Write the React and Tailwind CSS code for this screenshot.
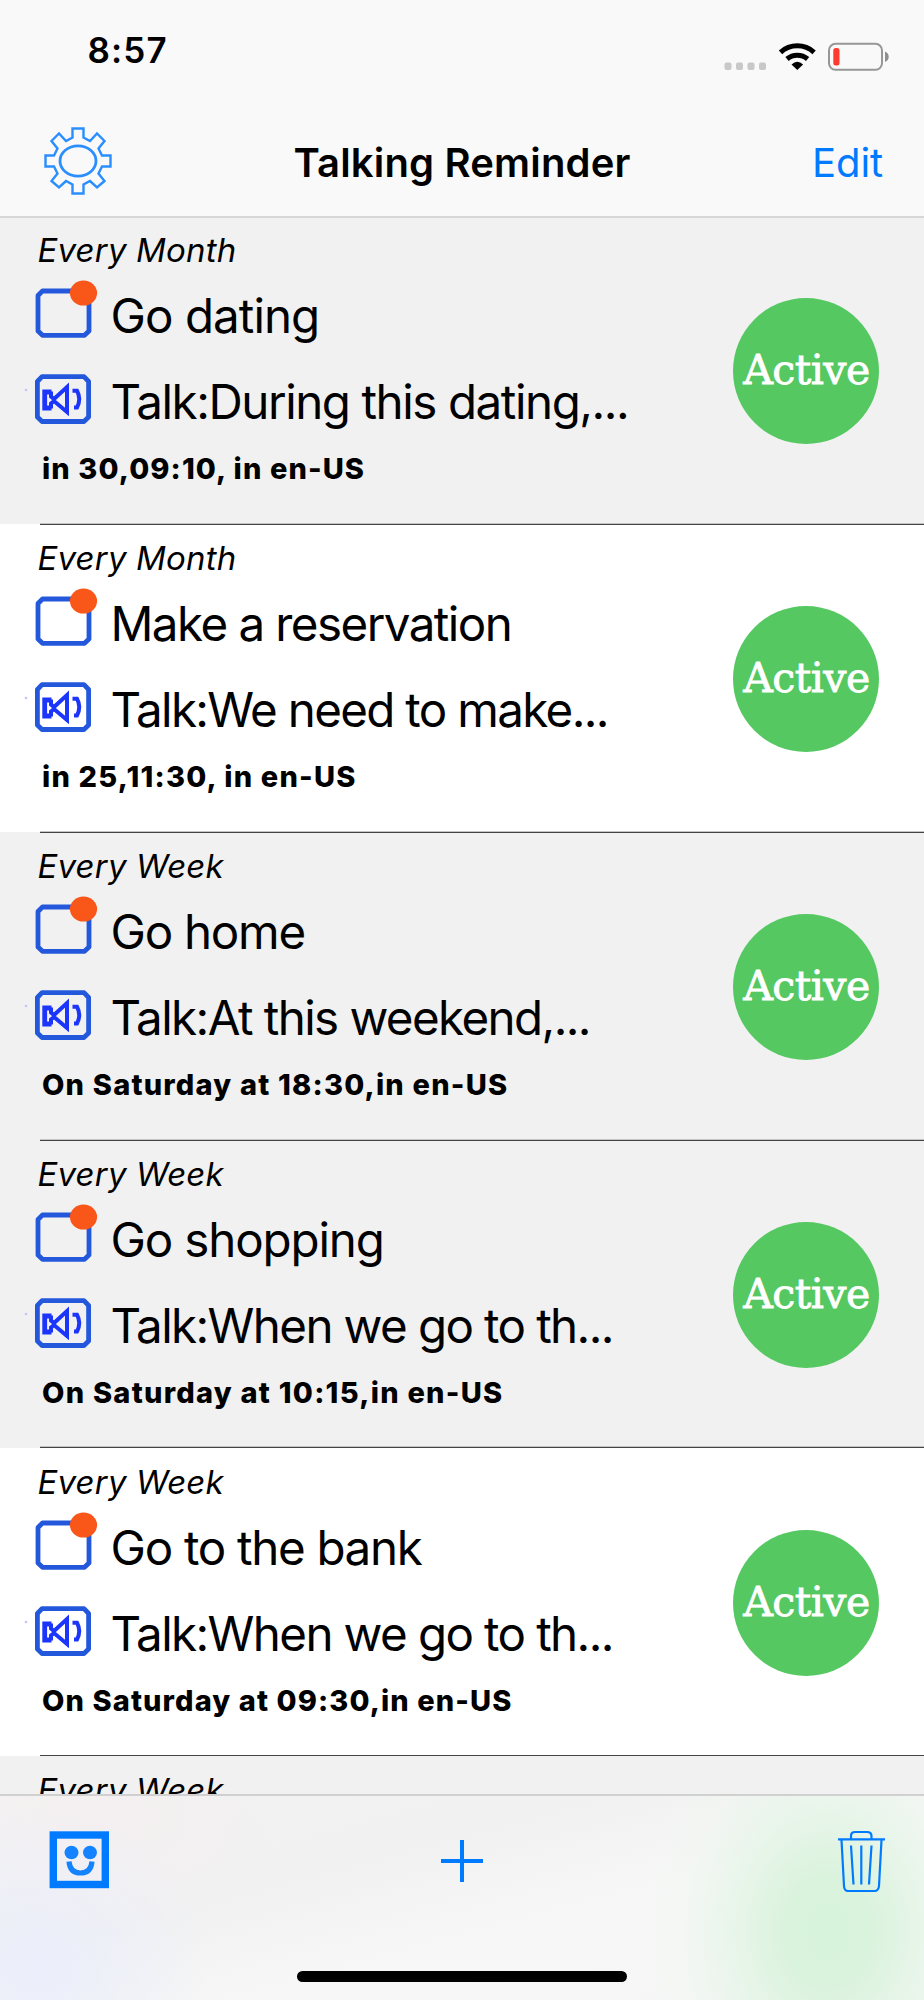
import React from "react";

const reminders = [
  { repeat: "Every Month", title: "Go dating", talk: "Talk:During this dating,...", when: "in 30,09:10, in en-US", shaded: true, ts: "tracking-[-0.95px]", ks: "tracking-[-1.43px]", ws: "tracking-[1.1px]", line: "-bottom-px border-t" },
  { repeat: "Every Month", title: "Make a reservation", talk: "Talk:We need to make...", when: "in 25,11:30, in en-US", shaded: false, ts: "tracking-[-1.55px]", ks: "tracking-[-1.66px]", ws: "tracking-[1.2px]", line: "-bottom-px border-t" },
  { repeat: "Every Week", title: "Go home", talk: "Talk:At this weekend,...", when: "On Saturday at 18:30,in en-US", shaded: true, ts: "tracking-[-1.25px]", ks: "tracking-[-1.58px]", ws: "tracking-[1.2px]", line: "-bottom-px border-t" },
  { repeat: "Every Week", title: "Go shopping", talk: "Talk:When we go to th...", when: "On Saturday at 10:15,in en-US", shaded: true, ts: "tracking-[-1.15px]", ks: "tracking-[-1.6px]", ws: "tracking-[1.25px]", line: "bottom-0 border-t" },
  { repeat: "Every Week", title: "Go to the bank", talk: "Talk:When we go to th...", when: "On Saturday at 09:30,in en-US", shaded: false, ts: "tracking-[-1.3px]", ks: "tracking-[-1.6px]", ws: "tracking-[1.1px]", line: "bottom-0" },
  { repeat: "Every Week", shaded: true, line: "bottom-0" },
];

function TaskIcon() {
  return (
    <svg className="h-[60px] w-[68px] shrink-0" viewBox="0 0 68 60" fill="none">
      <path d="M12.500 12H54.500L59 16.500V52L54.500 56.300H12.500L8 52V16.500Z" stroke="#2458dc" strokeWidth="4.800" strokeLinejoin="round" />
      <ellipse cx="53.500" cy="14.100" rx="13.600" ry="12.500" fill="#f95619" />
    </svg>
  );
}

function TalkIcon() {
  return (
    <svg className="h-[56px] w-[82px] shrink-0" viewBox="0 0 82 56" fill="none">
      <circle cx="6" cy="20" r="1.3" fill="#c3c6f5" />
      <path d="M22 6.700H64L68.600 11.500V47L64 51.500H22L17.400 47V11.500Z" stroke="#2458dc" strokeWidth="4.800" strokeLinejoin="round" />
      <path d="M31.500 22H24.700V38H31.500" stroke="#1c35fb" strokeWidth="4.800" />
      <path d="M31 21.500V26.500L34 29L47 17V42L34 31L31 33.500V38.500" stroke="#1c35fb" strokeWidth="4" />
      <path d="M52.500 20.800H57Q61.500 29 57 37.500H54" stroke="#1c35fb" strokeWidth="4" />
    </svg>
  );
}

function Row({ item }) {
  return (
    <article className={`relative flex h-[308px] shrink-0 ${item.shaded ? "bg-[#f1f1f1]" : "bg-white"}`}>
      <div className="flex w-[700px] flex-col pt-[14px]">
        <p className="h-10 pl-[37.500px] text-[33px] leading-10 tracking-[0.18px] italic">{item.repeat}</p>
        {item.title && (
          <>
            <div className="mt-[9px] flex h-16 items-start pl-[29.500px]">
              <TaskIcon />
              <h2 className={`mt-[9px] ml-[13px] text-[47.500px] leading-[56px] whitespace-nowrap ${item.ts}`}>{item.title}</h2>
            </div>
            <div className="mt-[27px] flex h-[60px] items-start pl-5">
              <TalkIcon />
              <p className={`mt-1 ml-[8.500px] text-[47.500px] leading-[56px] whitespace-nowrap ${item.ks}`}>{item.talk}</p>
            </div>
            <p className={`mt-[21px] pl-[42px] text-[29px] leading-9 font-extrabold whitespace-nowrap ${item.ws}`}>{item.when}</p>
          </>
        )}
      </div>
      {item.title && (
        <div className="mt-[82px] ml-[33px] flex size-[146px] items-center justify-center rounded-full bg-[#55c862] pl-px font-['DejaVu_Serif',serif] text-[41px] tracking-[-0.5px] text-white [-webkit-text-stroke:0.8px_white]">
          Active
        </div>
      )}
      <div className={`absolute right-0 left-[39.500px] z-10 box-content h-px border-[#c4c4c4] bg-[#444] ${item.line}`} />
    </article>
  );
}

function Gear() {
  return (
    <svg className="size-[68px]" viewBox="-34 -34 68 68" fill="none" stroke="#2a8eff" strokeWidth="2.400">
      <path d="M-5.500 -32.500H5.500V-23.500L12 -20L19 -27.500L26.500 -20L20.500 -12.500L24 -5.500H32.500V5.500H24L20.500 12.500L26.500 20L19 26.500L12 20L5.500 23.500V32.500H-5.500V23.500L-12 20L-19 26.500L-26.500 20L-20.500 12.500L-24 5.500H-32.500V-5.500H-24L-20.500 -12.500L-26.500 -20L-19 -27.500L-12 -20L-5.500 -23.500Z" />
      <ellipse rx="18" ry="15.200" strokeWidth="2.800" />
    </svg>
  );
}

export default function App() {
  return (
    <div className="flex h-[2000px] w-[924px] flex-col overflow-hidden bg-white font-['Inter',sans-serif] text-black">
      <header className="relative z-20 h-[218px] shrink-0 border-b-2 border-[#d6d6d6] bg-[#f9f9f9]">
        <div className="flex h-[110px] justify-between">
          <div className="mt-[29px] ml-[87.500px] text-[35px] leading-[42px] font-semibold tracking-[1.100px]">8:57</div>
          <svg className="mt-10 mr-[34px] h-8 w-[166px]" viewBox="724 40 166 32" fill="none">
            <g fill="#c8c8c8">
              <rect x="724.500" y="62.500" width="7" height="7.500" rx="2" />
              <rect x="736" y="62.500" width="7" height="7.500" rx="2" />
              <rect x="747.500" y="62.500" width="7" height="7.500" rx="2" />
              <rect x="759" y="62.500" width="7" height="7.500" rx="2" />
            </g>
            <path d="M780.500 52.300A25 25 0 0 1 814.100 52.300" stroke="#000" strokeWidth="5" />
            <path d="M787 59A16 16 0 0 1 807.600 59" stroke="#000" strokeWidth="5" />
            <path d="M791.500 64.500Q797.300 59 803.100 64.500L797.300 70Z" fill="#000" />
            <rect x="829" y="43.800" width="53" height="26" rx="6.500" stroke="#979797" strokeWidth="2" />
            <rect x="833.300" y="48" width="6.200" height="17.500" rx="2.500" fill="#ff3b30" />
            <path d="M885 51.500Q888.700 53 888.700 56.800T885 62Z" fill="#8f8f8f" />
          </svg>
        </div>
        <div className="flex h-[106px] items-start justify-between">
          <div className="mt-[16.500px] ml-11 w-[220px]"><Gear /></div>
          <h1 className="mt-7 text-[40px] leading-[50px] font-semibold tracking-[0.170px] whitespace-nowrap">Talking Reminder</h1>
          <div className="mt-7 mr-[41px] w-[223px] text-right text-[40px] leading-[50px] tracking-[-0.100px] text-[#007aff]">Edit</div>
        </div>
      </header>

      <main className="-mt-0.5 flex min-h-0 flex-1 flex-col overflow-hidden">
        {reminders.map((item, i) => <Row key={i} item={item} />)}
      </main>

      <footer className="h-[206px] shrink-0 border-t-2 border-[#d0d0d0] bg-[radial-gradient(ellipse_190px_240px_at_828px_135px,#d7f3da_0%,#daf3dd_22%,#e6f5e8dd_50%,#eff6f077_75%,#f6f6f600_100%),radial-gradient(ellipse_170px_160px_at_40px_170px,#ebeefb_0%,#eef0f900_100%),radial-gradient(ellipse_180px_120px_at_100px_20px,#f4eff0_0%,#f4f0f100_100%),linear-gradient(165deg,#f3f3f3_0%,#f1f1f1_35%,#f7f7f7_60%,#f6f6f6_100%)]">
        <div className="flex h-[175px] items-start justify-between">
          <svg className="mt-[35px] ml-[49px] h-[58px] w-[61px]" viewBox="0 0 61 58" fill="none">
            <rect x="4.300" y="4" width="52" height="49.500" stroke="#007aff" strokeWidth="7.400" />
            <ellipse cx="22.500" cy="21.500" rx="7" ry="6.800" fill="#1583ff" />
            <ellipse cx="41" cy="21.500" rx="7" ry="6.800" fill="#1583ff" />
            <path d="M20 30.500Q21 42 31.500 42T43 30.500" stroke="#1583ff" strokeWidth="5.200" />
          </svg>
          <svg className="mt-[43.500px] h-[42px] w-[42px]" viewBox="0 0 42 42" fill="none">
            <path d="M0 21H42M21 0V42" stroke="#007aff" strokeWidth="4" />
          </svg>
          <svg className="mt-[34px] mr-[38px] ml-[23px] h-[62px] w-[49px]" viewBox="0 0 49 62" fill="none" stroke="#007aff" strokeWidth="2.200">
            <path d="M1 9.300H48M4.500 10L7 56Q7.300 61 11 61H37.500Q41.500 61 42 56L44.500 10M14 9V6Q14 2 18 2H30Q34.500 2 34.500 6V9M14 15.500L16.500 54.500M24.300 15.500V54.500M34.500 15.500L32 54.500" />
          </svg>
        </div>
        <div className="mx-auto h-[11px] w-[330px] rounded-full bg-black" />
      </footer>
    </div>
  );
}
